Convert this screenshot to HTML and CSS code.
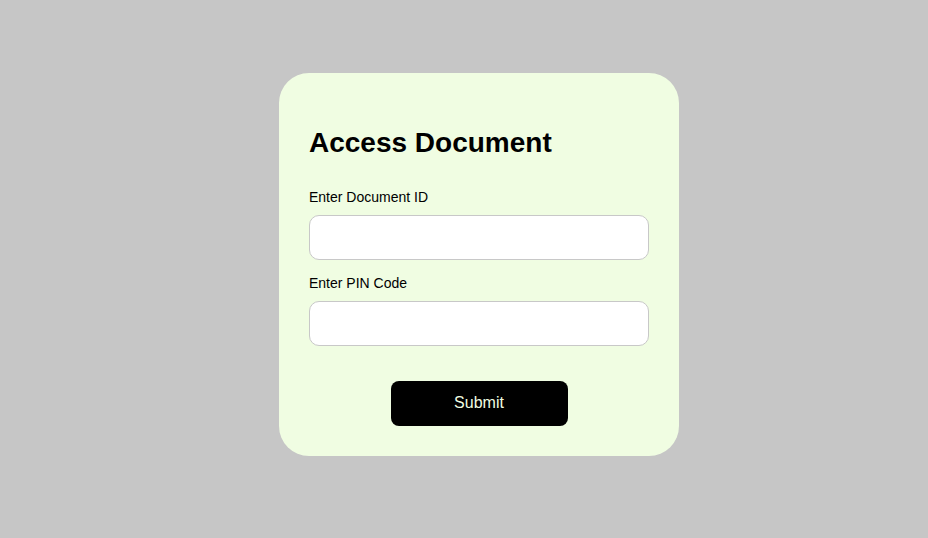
FILE: index.html
```html
<!DOCTYPE html>
<html>
<head>
<meta charset="utf-8">
<link rel="stylesheet" href="styles.css">
</head>
<body>
<div class="page">
  <form class="card">
    <h2 class="title">Access Document</h2>
    <label class="label" for="docid">Enter Document ID</label>
    <input class="field" id="docid" type="text">
    <label class="label" for="pin">Enter PIN Code</label>
    <input class="field" id="pin" type="password">
    <button class="submit" type="button">Submit</button>
  </form>
</div>
</body>
</html>
```
FILE: styles.css
```css
html, body {
  margin: 0;
  padding: 0;
  background: #c6c6c6;
  font-family: "Liberation Sans", Arial, sans-serif;
}
.page {
  width: 928px;
  height: 538px;
  display: flex;
  align-items: flex-start;
  justify-content: flex-start;
}
.card {
  box-sizing: border-box;
  width: 400px;
  margin: 73px 0 0 279px;
  padding: 30px;
  background: #f0fde2;
  border-radius: 30px;
  display: flex;
  flex-direction: column;
}
.title {
  margin: 24px 0 30px;
  font-size: 28px;
  line-height: 32px;
  font-weight: bold;
  color: #000;
}
.label {
  font-size: 14px;
  line-height: 16px;
  color: #000;
  margin-bottom: 10px;
}
.field {
  box-sizing: border-box;
  width: 340px;
  height: 45px;
  border: 1px solid #c8c8c8;
  border-radius: 10px;
  background: #fff;
  margin: 0 0 15px;
  padding: 0 10px;
  font-size: 14px;
}
.field:last-of-type {
  margin-bottom: 35px;
}
.submit {
  align-self: center;
  width: 177px;
  height: 45px;
  border: none;
  border-radius: 8px;
  background: #000;
  color: #f0fde2;
  font-family: "Liberation Sans", Arial, sans-serif;
  font-size: 16px;
  padding: 0 0 2px;
}
```
